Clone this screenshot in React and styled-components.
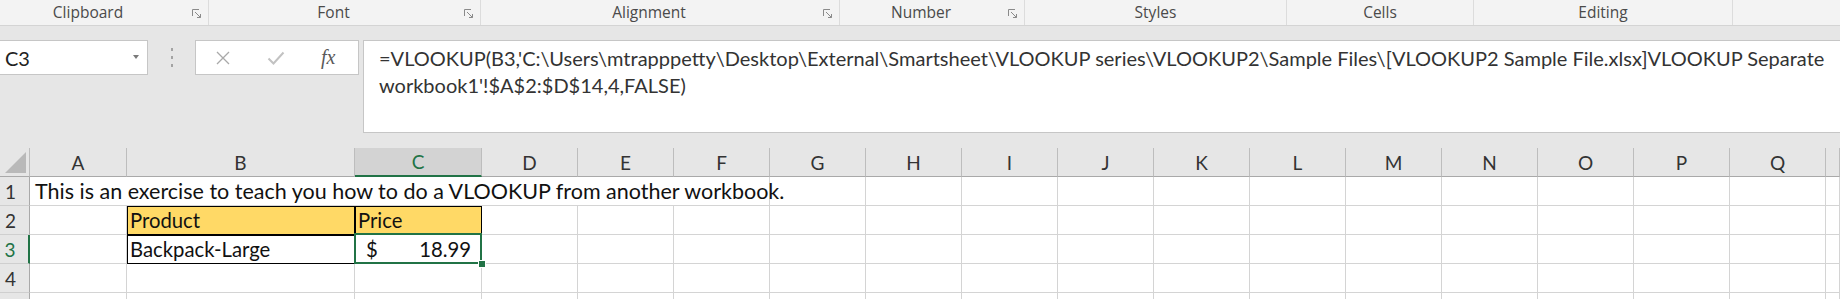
import styled, { createGlobalStyle } from "styled-components";

const GlobalStyle = createGlobalStyle`
	html, body {
		margin: 0;
		padding: 0;
		background: #e6e6e6;
		overflow: hidden;
	}
`;

const groups = [
	{ name: "Clipboard", width: 209, launcher: true, pad: 10 },
	{ name: "Font", width: 272, launcher: true },
	{ name: "Alignment", width: 359, launcher: true },
	{ name: "Number", width: 185, launcher: true },
	{ name: "Styles", width: 262 },
	{ name: "Cells", width: 187 },
	{ name: "Editing", width: 259 },
];

const columns = ["A", "B", "C", "D", "E", "F", "G", "H", "I", "J", "K", "L", "M", "N", "O", "P", "Q", ""];

const Launcher = () => (
	<svg width="10" height="10" viewBox="0 0 10 10" fill="none" stroke="#8a8a8a" strokeWidth="1">
		<path d="M0.5 7V0.5H7" />
		<path d="M3 3L8.5 8.5" />
		<path d="M8.5 5V8.5H5" />
	</svg>
);

const App = () => {
	return (
		<Page>
			<GlobalStyle />
			<RibbonLabels>
				{groups.map((g) => (
					<Group key={g.name} $width={g.width}>
						<GroupLabel $pad={g.pad}>{g.name}</GroupLabel>
						{g.launcher && (
							<LauncherSlot>
								<Launcher />
							</LauncherSlot>
						)}
					</Group>
				))}
			</RibbonLabels>

			<FormulaRow>
				<NameBox>
					<span>C3</span>
					<DropArrow />
				</NameBox>
				<Grip>
					<i />
					<i />
					<i />
				</Grip>
				<FxBox>
					<svg width="16" height="16" viewBox="0 0 16 16" stroke="#a9a9a9" strokeWidth="1.3">
						<path d="M2 2L14 14M14 2L2 14" />
					</svg>
					<svg width="18" height="16" viewBox="0 0 18 16" fill="none" stroke="#c2c2c2" strokeWidth="2">
						<path d="M1.5 8.5L6.5 13.5L16.5 2.5" />
					</svg>
					<Fx>fx</Fx>
				</FxBox>
				<FormulaBox>
					<FormulaLine>
						=VLOOKUP(B3,'C:\Users\mtrapppetty\Desktop\External\Smartsheet\VLOOKUP series\VLOOKUP2\Sample
						Files\[VLOOKUP2 Sample File.xlsx]VLOOKUP Separate
					</FormulaLine>
					<FormulaLine>workbook1'!$A$2:$D$14,4,FALSE)</FormulaLine>
				</FormulaBox>
			</FormulaRow>

			<Sheet>
				<Corner>
					<svg width="21" height="21" viewBox="0 0 21 21">
						<polygon points="0,21 21,21 21,0" fill="#b9b9b9" />
					</svg>
				</Corner>
				{columns.map((c) => (
					<ColHead key={c || "end"} $active={c === "C"}>
						{c}
					</ColHead>
				))}

				<RowHead>1</RowHead>
				<Cell $span={6} $size={21.5}>
					This is an exercise to teach you how to do a VLOOKUP from another workbook.
				</Cell>
				{Array.from({ length: 12 }).map((_, i) => (
					<Cell key={i} />
				))}

				<RowHead>2</RowHead>
				<Cell />
				<BoxCell $fill>Product</BoxCell>
				<BoxCell $fill>Price</BoxCell>
				{Array.from({ length: 15 }).map((_, i) => (
					<Cell key={i} />
				))}

				<RowHead $active>3</RowHead>
				<Cell />
				<BoxCell>Backpack-Large</BoxCell>
				<BoxCell $selected>
					<Money>
						<span>$</span>
						<span>18.99</span>
					</Money>
				</BoxCell>
				{Array.from({ length: 15 }).map((_, i) => (
					<Cell key={i} />
				))}

				<RowHead>4</RowHead>
				{Array.from({ length: 18 }).map((_, i) => (
					<Cell key={i} />
				))}

				<RowHead />
				{Array.from({ length: 18 }).map((_, i) => (
					<Cell key={i} />
				))}
			</Sheet>
		</Page>
	);
};

export default App;

const Page = styled.div`
	width: 1840px;
	height: 299px;
	overflow: hidden;
	background: #e6e6e6;
	font-family: Lato, "Open Sans", sans-serif;
`;

const RibbonLabels = styled.div`
	display: flex;
	height: 25px;
	background: #f3f3f3;
	border-bottom: 1px solid #d4d4d4;
`;

const Group = styled.div`
	display: flex;
	align-items: center;
	box-sizing: border-box;
	width: ${(p) => p.$width}px;
	border-right: 1px solid #dcdcdc;
`;

const GroupLabel = styled.div`
	flex: 1;
	text-align: center;
	padding-right: ${(p) => p.$pad || 0}px;
	font-family: "Open Sans", sans-serif;
	font-size: 15.5px;
	color: #4a4a4a;
	line-height: 25px;
`;

const LauncherSlot = styled.div`
	width: 22px;
	display: flex;
	justify-content: center;
	align-items: center;
	padding-top: 2px;
`;

const FormulaRow = styled.div`
	display: flex;
	align-items: flex-start;
	height: 122px;
	padding-top: 14px;
	box-sizing: border-box;
`;

const NameBox = styled.div`
	display: flex;
	align-items: center;
	justify-content: space-between;
	box-sizing: border-box;
	width: 148px;
	height: 35px;
	background: #fff;
	border: 1px solid #c6c6c6;
	border-left: none;
	padding: 0 8px 0 5px;
	font-size: 20px;
	color: #222;
`;

const DropArrow = styled.div`
	width: 0;
	height: 0;
	border-left: 3.5px solid transparent;
	border-right: 3.5px solid transparent;
	border-top: 4px solid #7a7a7a;
	margin-top: -2px;
`;

const Grip = styled.div`
	width: 47px;
	height: 35px;
	display: flex;
	flex-direction: column;
	align-items: center;
	justify-content: center;
	gap: 5px;

	i {
		display: block;
		width: 2px;
		height: 3px;
		background: #a3a3a3;
	}
`;

const FxBox = styled.div`
	display: flex;
	align-items: center;
	gap: 36px;
	box-sizing: border-box;
	width: 164px;
	height: 35px;
	background: #fff;
	border: 1px solid #c6c6c6;
	padding-left: 19px;
`;

const Fx = styled.span`
	font-family: "Liberation Serif", serif;
	font-style: italic;
	font-size: 20px;
	color: #5a5a5a;
`;

const FormulaBox = styled.div`
	flex: 1;
	box-sizing: border-box;
	height: 93px;
	margin-left: 4px;
	background: #fff;
	border: 1px solid #c6c6c6;
	border-right: none;
	padding: 4px 0 0 15px;
	font-size: 20px;
	line-height: 27px;
	color: #333;
`;

const FormulaLine = styled.div`
	white-space: nowrap;
`;

const Sheet = styled.div`
	display: grid;
	grid-template-columns: 30px 97px 228px 127px repeat(14, 96px) 1fr;
	grid-template-rows: repeat(6, 29px);
	background: #fff;
	font-size: 20.3px;
	color: #111;
`;

const Corner = styled.div`
	background: #e6e6e6;
	border-right: 1px solid #bdbdbd;
	border-bottom: 1px solid #a9a9a9;
	display: flex;
	align-items: flex-end;
	justify-content: flex-end;
	padding: 0 3px 3px 0;
`;

const ColHead = styled.div`
	display: flex;
	align-items: center;
	justify-content: center;
	background: ${(p) => (p.$active ? "#d3d3d3" : "#e6e6e6")};
	color: ${(p) => (p.$active ? "#217346" : "#333")};
	border-right: 1px solid #bdbdbd;
	border-bottom: ${(p) => (p.$active ? "2px solid #217346" : "1px solid #a9a9a9")};
	box-sizing: border-box;
	font-size: 19px;
`;

const RowHead = styled.div`
	display: flex;
	align-items: center;
	justify-content: center;
	padding-right: 8px;
	background: #e6e6e6;
	color: ${(p) => (p.$active ? "#217346" : "#333")};
	border-bottom: 1px solid #cfcfcf;
	border-right: ${(p) => (p.$active ? "2px solid #217346" : "1px solid #a9a9a9")};
	box-sizing: border-box;
	font-size: 19px;
`;

const Cell = styled.div`
	grid-column: span ${(p) => p.$span || 1};
	display: flex;
	align-items: flex-end;
	padding: 0 0 2px 5px;
	box-sizing: border-box;
	border-right: 1px solid #d4d4d4;
	border-bottom: 1px solid #d4d4d4;
	white-space: nowrap;
	line-height: 24px;
	${(p) => p.$size && `font-size: ${p.$size}px;`}
`;

const BoxCell = styled(Cell)`
	position: relative;
	padding-left: 3px;
	background: ${(p) => (p.$fill ? "#ffd966" : "#fff")};
	outline: 1px solid #000;
	outline-offset: -1px;
	z-index: 1;

	${(p) =>
		p.$selected &&
		`
		outline: none;
		border-right-color: #000;
		border-bottom-color: #000;
		&::after {
			content: "";
			position: absolute;
			top: -2px;
			left: -1px;
			right: -1px;
			bottom: -1px;
			border: 2px solid #217346;
		}
		&::before {
			content: "";
			position: absolute;
			right: -5px;
			bottom: -5px;
			width: 6px;
			height: 6px;
			background: #217346;
			border: 1px solid #fff;
			z-index: 2;
		}
	`}
`;

const Money = styled.div`
	flex: 1;
	display: flex;
	justify-content: space-between;
	padding: 0 10px 0 8px;
`;
